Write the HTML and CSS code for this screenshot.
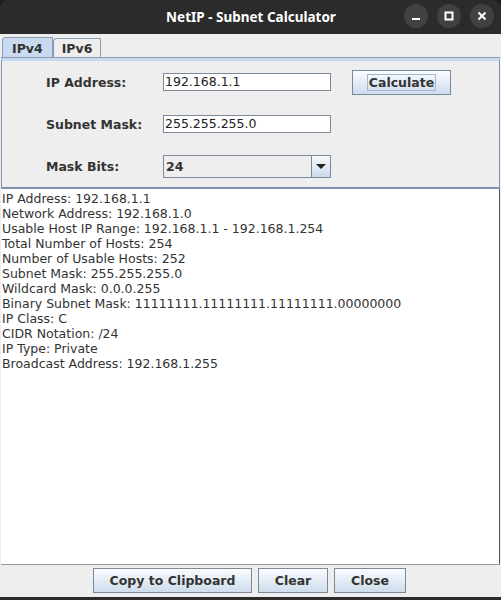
FILE: index.html
```html
<!DOCTYPE html>
<html>
<head>
<meta charset="utf-8">
<link rel="stylesheet" href="styles.css">
</head>
<body>
<div class="window">
  <div class="titlebar">
    <div class="title">NetIP - Subnet Calculator</div>
    <div class="wbtns">
      <span class="wbtn"><svg width="10" height="10" viewBox="0 0 10 10"><rect x="1" y="7" width="8" height="2" fill="#fff"/></svg></span>
      <span class="wbtn"><svg width="10" height="10" viewBox="0 0 10 10"><rect x="1.5" y="1.5" width="7" height="7" fill="none" stroke="#fff" stroke-width="2"/></svg></span>
      <span class="wbtn"><svg width="10" height="10" viewBox="0 0 10 10"><path d="M1.5 1.5 L8.5 8.5 M8.5 1.5 L1.5 8.5" stroke="#fff" stroke-width="2"/></svg></span>
    </div>
  </div>
  <div class="client">
    <div class="tabs">
      <div class="tab active">IPv4</div>
      <div class="tab">IPv6</div>
    </div>
    <div class="panel">
      <div class="form">
        <div class="lbl">IP Address:</div>
        <div class="field">192.168.1.1</div>
        <div class="btn calc"><span class="focus">Calculate</span></div>
        <div class="lbl">Subnet Mask:</div>
        <div class="field">255.255.255.0</div>
        <div></div>
        <div class="lbl">Mask Bits:</div>
        <div class="combo"><span class="cval">24</span><span class="carrow"><svg width="10" height="6" viewBox="0 0 10 6"><path d="M0 0 H10 L5 5 Z" fill="#222"/></svg></span></div>
        <div></div>
      </div>
    </div>
    <div class="output">
      <div>IP Address: 192.168.1.1</div>
      <div>Network Address: 192.168.1.0</div>
      <div>Usable Host IP Range: 192.168.1.1 - 192.168.1.254</div>
      <div>Total Number of Hosts: 254</div>
      <div>Number of Usable Hosts: 252</div>
      <div>Subnet Mask: 255.255.255.0</div>
      <div>Wildcard Mask: 0.0.0.255</div>
      <div>Binary Subnet Mask: 11111111.11111111.11111111.00000000</div>
      <div>IP Class: C</div>
      <div>CIDR Notation: /24</div>
      <div>IP Type: Private</div>
      <div>Broadcast Address: 192.168.1.255</div>
    </div>
    <div class="footer">
      <div class="btn copy">Copy to Clipboard</div>
      <div class="btn clear">Clear</div>
      <div class="btn close">Close</div>
    </div>
  </div>
</div>
</body>
</html>
```
FILE: styles.css
```css
html, body {
  margin: 0;
  padding: 0;
  background: #1e1e1e;
}
.window {
  width: 501px;
  height: 600px;
  display: flex;
  flex-direction: column;
  background: #2b2b2b;
  border-radius: 9px 9px 0 0;
  overflow: hidden;
  font-family: "DejaVu Sans", sans-serif;
}
.titlebar {
  height: 34px;
  flex: none;
  display: flex;
  align-items: center;
  justify-content: center;
  position: relative;
  background: #2b2b2b;
}
.title {
  color: #ffffff;
  font-family: "Noto Sans", "Open Sans", sans-serif;
  font-weight: 700;
  font-size: 13.5px;
  padding-left: 1px;
}
.wbtns {
  position: absolute;
  right: 7px;
  top: 4px;
  display: flex;
  gap: 9px;
}
.wbtn {
  width: 24px;
  height: 24px;
  border-radius: 50%;
  background: #414141;
  display: flex;
  align-items: center;
  justify-content: center;
}
.client {
  flex: 1;
  display: flex;
  flex-direction: column;
  background: #eeeeee;
  margin-bottom: 3px;
  padding: 0 1px;
}
.tabs {
  height: 24px;
  flex: none;
  display: flex;
  align-items: flex-end;
  padding-left: 1px;
}
.tab {
  height: 19px;
  border: 1px solid #8a9bb3;
  border-bottom: none;
  border-radius: 4px 0 0 0;
  font-weight: 700;
  font-size: 12.5px;
  color: #333;
  display: flex;
  align-items: center;
  padding: 0 8px;
  background: #eeeeee;
}
.tab.active {
  background: #c8daef;
  height: 20px;
  padding: 0 9px;
}
.panel {
  flex: none;
  border: 1px solid #7f93ae;
  border-top: 3px solid #c8daef;
  box-shadow: 0 -1px 0 #8a9bb3;
  border-bottom: 2px solid #7f93ae;
  background: #eeeeee;
  padding: 9px 0 0 44px;
  box-sizing: border-box;
  height: 131px;
}
.form {
  display: grid;
  grid-template-columns: 117px 168px 120px;
  grid-template-rows: 24px 24px 24px;
  row-gap: 18px;
  align-items: center;
}
.lbl {
  font-weight: 700;
  font-size: 12.5px;
  color: #333;
}
.field {
  height: 18px;
  box-sizing: border-box;
  border: 1px solid #7a8a99;
  background: #fff;
  font-size: 12.5px;
  color: #222;
  padding-left: 1px;
  line-height: 16px;
}
.combo {
  height: 23px;
  box-sizing: border-box;
  border: 1px solid #7a8a99;
  background: #eeeeee;
  display: flex;
  align-items: stretch;
  margin-top: 1px;
}
.cval {
  flex: 1;
  font-weight: 700;
  font-size: 12.5px;
  color: #333;
  display: flex;
  align-items: center;
  padding-left: 2px;
}
.carrow {
  width: 18px;
  border-left: 1px solid #7a8a99;
  background: linear-gradient(#f5f8fc, #dde8f3 60%, #c9d9ea);
  display: flex;
  align-items: center;
  justify-content: center;
}
.btn {
  box-sizing: border-box;
  height: 25px;
  border: 1px solid #7a8a99;
  background: linear-gradient(#fafcfe, #e4ecf5 50%, #cfdcec);
  font-weight: 700;
  font-size: 12.5px;
  color: #333;
  display: flex;
  align-items: center;
  justify-content: center;
}
.calc {
  width: 99px;
  margin-left: 21px;
}
.focus {
  outline: 1px solid #a3b8cc;
  padding: 0 1px;
  line-height: 15px;
}
.output {
  flex: 1;
  background: #ffffff;
  border-right: 1px solid #555;
  font-size: 12.5px;
  line-height: 15px;
  color: #333;
  padding: 2px 0 0 1px;
  white-space: nowrap;
}
.footer {
  height: 31px;
  flex: none;
  display: flex;
  justify-content: center;
  align-items: center;
  gap: 6px;
  border-top: 1px solid #999;
  padding-right: 2px;
  padding-bottom: 1px;
}
.copy { width: 159px; }
.clear { width: 70px; }
.close { width: 72px; }
```
